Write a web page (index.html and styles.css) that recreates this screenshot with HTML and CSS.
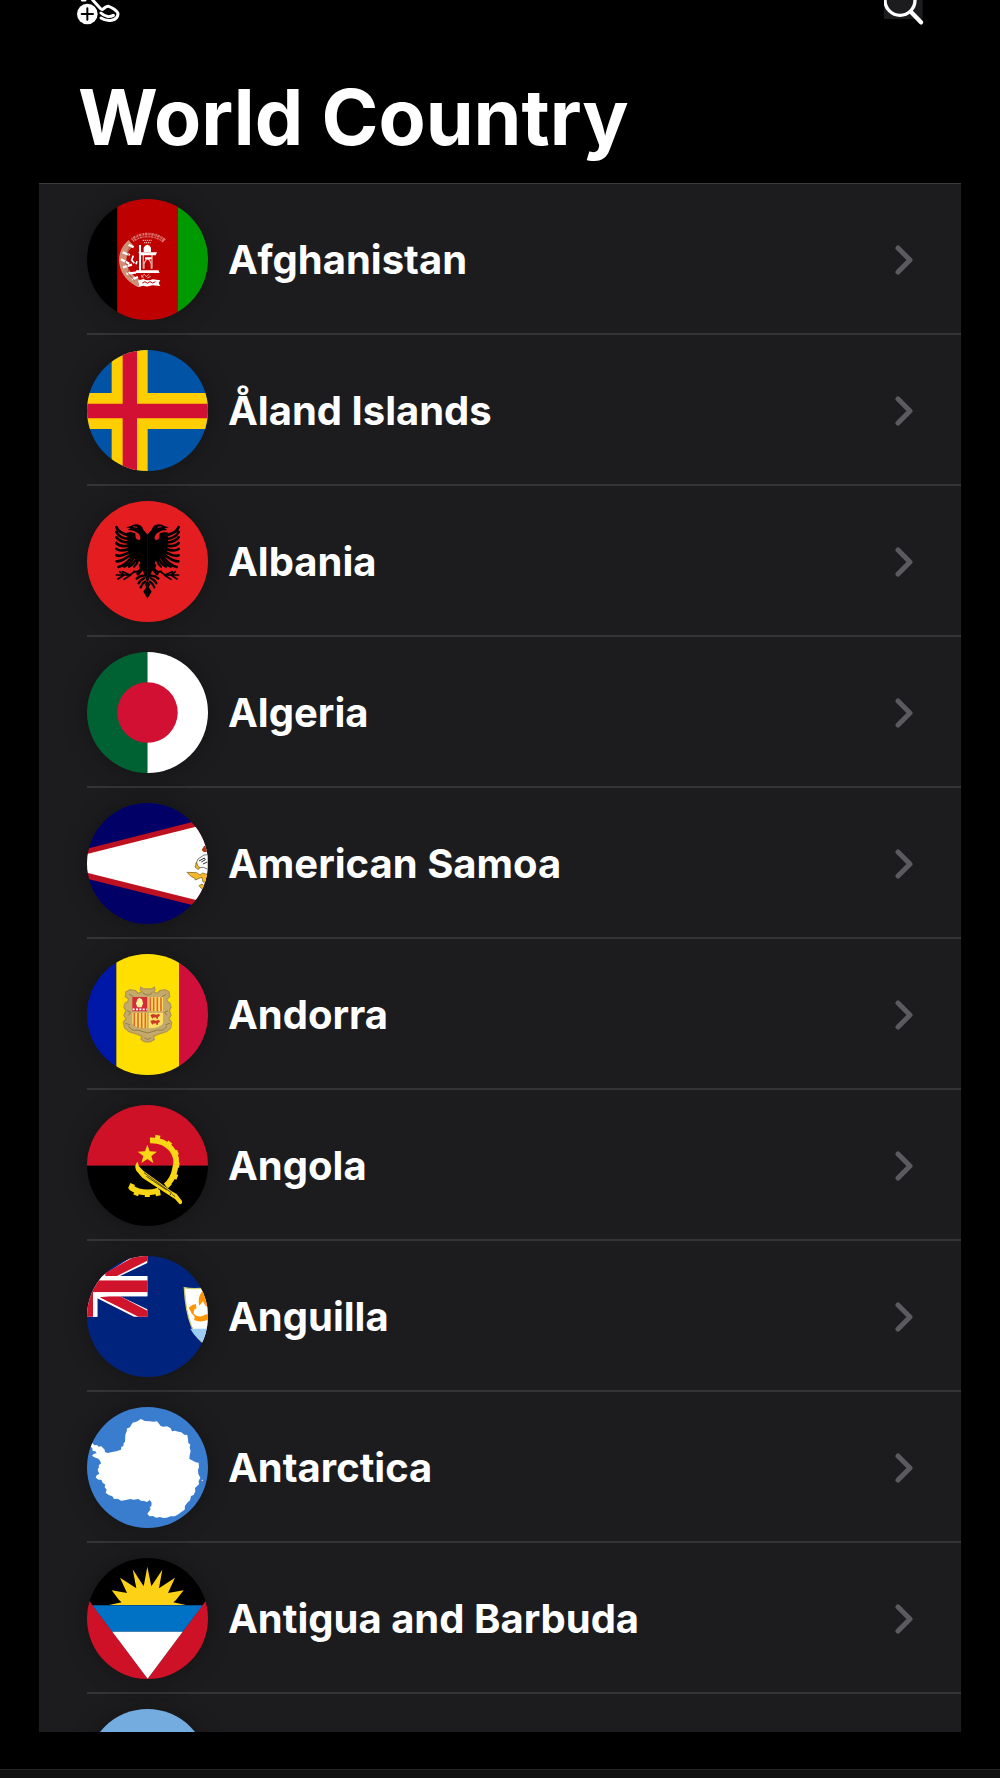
FILE: index.html
```
<!DOCTYPE html>
<html lang="en">
<head>
    <meta charset="UTF-8">
    <meta name="viewport" content="width=device-width, initial-scale=1">
    <title>World Country</title>
    <link rel="stylesheet" href="styles.css">
</head>
<body>
    <header class="header">
        <div class="toolbar">
            <button class="icon-button" aria-label="Add">
                <svg width="44" height="25" viewBox="0 0 132 75" fill="none" stroke="#fff" stroke-width="9" stroke-linecap="round" stroke-linejoin="round">
                    <path d="M19 0H27M50 0L74 26Q78 31 83 26Q91 18 98 19C106 21 125 33 126 42C124 64 94 66 75 54M75 39C86 50 101 52 112 46"/>
                    <circle cx="34" cy="42" r="31" fill="#fff" stroke="none"/>
                    <path d="M17 42H51M34 25V59" stroke="#000" stroke-width="6"/>
                </svg>
            </button>
            <button class="icon-button" aria-label="Search">
                <svg width="40" height="25" viewBox="0 0 120 75" fill="none" stroke="#fff">
                    <path d="M0 0H116V57H0Z" fill="#1c1c1e" stroke="none"/>
                    <circle cx="48" cy="1" r="45" stroke-width="10"/>
                    <path d="M82 37L111 67" stroke-width="13" stroke-linecap="round"/>
                </svg>
            </button>
        </div>
        <h1 class="title">World Country</h1>
    </header>

    <main class="list-wrapper">
        <ul class="country-list">
            <li><a class="country" href="#afghanistan">
                <svg class="flag" viewBox="51 27 363 363">
                    <path d="M51 27h91v363H51z"/>
                    <path fill="#bf0000" d="M142 27h182v363H142z"/>
                    <path fill="#090" d="M324 27h90v363h-90z"/>
                    <g fill="none">
                        <path d="M183 158C147 190 147 249 208 281" stroke="#cf8f75" stroke-width="22"/>
                        <path d="M158 187l22 8M153 208l25 13M159 232l27-8M169 251l29-3M186 268l18-7M176 164l15 8" stroke="#fff" stroke-width="7"/>
                        <path d="M180 170l-8 18 8 14-15 14 12 20-4 12 20 24" stroke="#a5331f" stroke-width="2"/>
                        <path d="M190 197l-5 13 8 10M201 214l-3 9" stroke="#fff" stroke-width="5"/>
                        <path d="M187 151C210 130 257 129 283 153" stroke="#d9716b" stroke-width="14" stroke-dasharray="4 2 7 2 2 1"/>
                        <path d="M194 147C216 133 250 133 276 149" stroke="#bf0000" stroke-width="2"/>
                        <path d="M218 151h27M222 158h20" stroke="#e7aca5" stroke-width="4" stroke-dasharray="4 2"/>
                        <path d="M210 165v77" stroke="#fff" stroke-width="6"/>
                        <path d="M220 195v41M246 195v41" stroke="#e7aca5" stroke-width="4"/>
                        <path d="M222 236v-14q11-30 22 0v14" stroke="#e7aca5" stroke-width="4"/>
                        <path d="M213 262l10-9 6 7 9-8M214 255l7 10M232 264l10-5" stroke="#e7aca5" stroke-width="3"/>
                    </g>
                    <path fill="#fff" d="M221 186V173Q224 166 232 164Q240 166 243 173V186ZM205 187H261L257 196H209ZM199 241H265L269 249H195ZM203 272L220 267Q233 274 248 268L271 271 266 279 271 288 247 286Q232 292 220 287L204 291 208 281Z"/>
                    <path fill="#fff" d="M225 202h20v6h-20z"/>
                    <path d="M217 279l8-4 7 5 8-5 8 4 8-4" fill="none" stroke="#bf0000" stroke-width="3"/>
                </svg>
                <span class="name">Afghanistan</span>
                <svg class="chevron" viewBox="0 0 18 30"><path d="M3 3L15 15L3 27"/></svg>
            </a></li>
            <li><a class="country" href="#aland">
                <svg class="flag" viewBox="51 29 363 363">
                    <path fill="#0053a5" d="M51 29h363v363H51z"/>
                    <path fill="#ffce00" d="M125 29h108v363H125zM51 158h363v108H51z"/>
                    <path fill="#d21034" d="M158 29h43v363h-43zM51 190h363v44H51z"/>
                </svg>
                <span class="name">Åland Islands</span>
                <svg class="chevron" viewBox="0 0 18 30"><path d="M3 3L15 15L3 27"/></svg>
            </a></li>
            <li><a class="country" href="#albania">
                <svg class="flag" viewBox="51 33 363 363">
                    <path fill="#e41e20" d="M51 33h363v363H51z"/>
                    <g id="eagle">
                        <path d="M233 134L220 119Q215 104 200 103Q188 103 181 109L168 112L181 115L173 120Q190 120 196 125Q213 131 211 148Q204 154 197 144L196 130L181 126L170 128L172 155L173 181L180 201L206 209L215 229L223 255L233 281Z"/>
                        <path d="M233 270L224 284L229 290L220 305L233 326Z"/>
                        <g fill="none" stroke="#000" stroke-width="8" stroke-linecap="round">
                            <path d="M139 111C143 122 158 132 177 136M139 126C145 138 158 146 177 147M139 142C147 153 160 158 177 157M139 159C147 168 161 170 177 167M139 177C149 184 163 182 178 176M139 196C150 201 165 194 181 185M140 214C154 215 170 204 185 192M145 231C159 228 176 214 188 198"/>
                            <path d="M163 230C176 224 186 213 192 202M177 230C187 224 196 214 200 204M192 230Q202 222 205 208M222 257Q209 257 200 266M222 265Q211 270 206 280M225 275Q215 281 212 292" stroke-width="7"/>
                            <path d="M212 235C207 244 201 249 191 244M195 244L180 255H139M182 255L162 268M180 255L158 245M161 255L149 245M162 255L144 267" stroke-width="5"/>
                            <path d="M211 226L216 237L204 251" stroke-width="10"/>
                        </g>
                        <path d="M190 110L202 112" stroke="#e41e20" stroke-width="3"/>
                    </g>
                    <use href="#eagle" transform="matrix(-1 0 0 1 465 0)"/>
                </svg>
                <span class="name">Albania</span>
                <svg class="chevron" viewBox="0 0 18 30"><path d="M3 3L15 15L3 27"/></svg>
            </a></li>
            <li><a class="country" href="#algeria">
                <svg class="flag" viewBox="0 0 120 120">
                    <path fill="#006233" d="M0 0h60v120H0z"/>
                    <path fill="#fff" d="M60 0h60v120H60z"/>
                    <circle cx="60" cy="60" r="30" fill="#d21034"/>
                </svg>
                <span class="name">Algeria</span>
                <svg class="chevron" viewBox="0 0 18 30"><path d="M3 3L15 15L3 27"/></svg>
            </a></li>
            <li><a class="country" href="#american-samoa">
                <svg class="flag" viewBox="51 39 363 363">
                    <path fill="#006" d="M51 39h363v363H51z"/>
                    <path fill="#bd1021" d="M51 176L370 95H414V346H370L51 266z"/>
                    <path fill="#fff" d="M51 192L375 111H414V329H375L51 248z"/>
                    <path fill="#a93a18" d="M395 180L402 168H414V186L401 186z"/>
                    <path fill="#fff" stroke="#333" stroke-width="2" d="M414 194L402 195 384 207 378 221 384 234 400 232 414 238z"/>
                    <path fill="none" stroke="#333" stroke-width="3" d="M387 213L403 204 406 209 394 216M399 222L412 216"/>
                    <path fill="#f5b82b" stroke="#6e5515" stroke-width="2" d="M380 217L375 231 385 239 389 232 383 227zM351 247L380 248 390 255 398 249 414 254V278L399 276 396 262 385 266 376 270 374 264 364 260zM387 287L396 282 403 288 414 284V292L396 297z"/>
                </svg>
                <span class="name">American Samoa</span>
                <svg class="chevron" viewBox="0 0 18 30"><path d="M3 3L15 15L3 27"/></svg>
            </a></li>
            <li><a class="country" href="#andorra">
                <svg class="flag" viewBox="51 42 363 363">
                    <path fill="#0018a8" d="M51 42h88v363H51z"/>
                    <path fill="#fedf00" d="M139 42h188v363H139z"/>
                    <path fill="#d0103a" d="M327 42h87v363h-87z"/>
                    <path fill="#c4aa6a" stroke="#b39653" stroke-width="4" d="M233 147L222 147 212 142 211 151 217 156 204 160 196 152 180 149 168 156 166 170 176 177 174 184 165 190 162 202 168 211 162 226 168 236 160 247 164 264 177 275 203 283 216 289 213 298 222 304 233 306 243 304 253 298 250 289 263 283 289 275 302 264 305 248 297 236 303 226 298 211 303 202 300 190 292 184 290 177 299 170 297 156 285 149 270 152 262 160 249 156 255 151 253 142 244 147Z"/>
                    <path fill="none" stroke="#907a49" stroke-width="3" d="M177 163l13 7M289 163l-13 7M219 159q14 12 27 0M172 212l10 5-7 9M294 212l-10 5 7 9M175 257Q183 275 203 270L233 279 263 270Q283 275 291 257M223 293l10 6 10-6M166 250l14 4M300 250l-14 4"/>
                    <path fill="#d52b36" d="M187 171h44v43h-44z"/>
                    <path fill="#fedf61" d="M236 171h43v43h-43zM187 218H231V265Q192 265 187 250zM236 218H279V250Q272 265 236 265z"/>
                    <path fill="#fff2a0" d="M202 178l6-5 8 5 3 12-4 12H202l-4-11z"/>
                    <path stroke="#fff" stroke-width="5" stroke-dasharray="6 4" d="M188 208h42"/>
                    <path stroke="#e0662d" stroke-width="5" d="M241 172v42M251 172v42M262 172v42M273 172v42M193 218v40M204 218v45M215 218v47M226 218v47"/>
                    <path id="cow" fill="#c93c28" d="M241 225L249 222 259 224 267 221 270 227 264 231V236H259L258 232 249 233 247 237 244 231z"/>
                    <use href="#cow" transform="translate(0 18)"/>
                </svg>
                <span class="name">Andorra</span>
                <svg class="chevron" viewBox="0 0 18 30"><path d="M3 3L15 15L3 27"/></svg>
            </a></li>
            <li><a class="country" href="#angola">
                <svg class="flag" viewBox="51 30 363 363">
                    <path fill="#ce1126" d="M51 30h363v182H51z"/>
                    <path d="M51 212h363v181H51z"/>
                    <path fill="none" stroke="#f9d616" stroke-width="17" d="M240 136C294 134 330 176 315 222C311 245 302 260 287 272M182 277Q218 302 267 286"/>
                    <path fill="none" stroke="#f9d616" stroke-width="15" d="M264 121l-3 16M301 141l-10 13M324 171l-15 6M328 211l-16-2M322 247l-15-6M300 274l-10-10M188 267l-7 16M202 288l-5 13M232 290v16M262 286l3 16"/>
                    <path fill="#f9d616" d="M232 149L239 169 261 170 244 183 250 204 232 192 214 204 220 183 203 170 225 169z"/>
                    <path fill="#f9d616" d="M203 200L207 214 220 227 305 289 320 297 336 318Q338 328 329 328L315 312 304 305 217 248 199 227Q191 211 203 200z"/>
                    <path fill="none" stroke="#000" stroke-width="2" d="M222 233L304 293 300 301M229 244L290 285M307 298L315 305"/>
                </svg>
                <span class="name">Angola</span>
                <svg class="chevron" viewBox="0 0 18 30"><path d="M3 3L15 15L3 27"/></svg>
            </a></li>
            <li><a class="country" href="#anguilla">
                <svg class="flag" viewBox="51 33 363 363">
                    <path fill="#00247d" d="M51 33h363v363H51z"/>
                    <path fill="#fff" d="M51 93H232V154H82V215H51zM95 93L190 33H232V54L150 93zM82 154H150L232 193V215H192L82 160z"/>
                    <path fill="#cf142b" d="M51 106H232V142H69V215H51zM106 84L196 33H232V47L141 93H106zM117 154H150L232 197V215H205L89 157z"/>
                    <path fill="#fff" d="M51 93H232V106H51zM69 142H232V154H82V215H69z"/>
                    <path fill="#fff" stroke="#c8cf73" stroke-width="4" d="M343 128Q370 134 414 128V304Q350 270 343 128z"/>
                    <path fill="#9dcdf3" d="M361 251H414V301Q378 284 361 251z"/>
                    <path fill="#ff9500" d="M388 182Q381 159 397 139L414 134V188Q402 180 399 169zM356 188L367 180 378 177 379 190 372 195 371 206Q387 221 405 209L414 207V224Q391 234 372 225 378 213 366 207z"/>
                </svg>
                <span class="name">Anguilla</span>
                <svg class="chevron" viewBox="0 0 18 30"><path d="M3 3L15 15L3 27"/></svg>
            </a></li>
            <li><a class="country" href="#antarctica">
                <svg class="flag" viewBox="51 36 363 363">
                    <path fill="#3a7dce" d="M51 36h363v363H51z"/>
                    <path fill="#fff" d="M67 144L73 151 81 150 86 155 94 154 104 164 105 171 113 174 127 171 139 169 153 164 154 155 160 154 161 145 165 140 166 119 171 106 170 101 180 97 183 91 188 83 199 80 207 76 215 73 224 78 240 79 250 80 261 79 266 85 272 93 280 95 291 94 302 100 306 109 315 107 325 110 334 112 343 119 352 120 354 133 355 144 361 149 359 158 362 169 359 181 358 192 366 196 377 202 386 203 387 217 384 225 385 237 391 248 386 258 387 268 379 275 375 279 376 289 371 300 363 303 360 316 352 323 345 332 344 344 337 349 325 358 314 364 302 364 290 368 280 369 270 366 259 368 248 363 238 364 232 356 238 348 242 343 239 337 244 333 245 323 239 315 231 321 222 318 212 317 206 312 191 314 181 312 164 316 153 317 143 311 132 312 127 304 116 300 107 293 110 284 104 277 106 269 98 263 94 254 86 254 77 248 80 241 88 236 85 230 83 223 87 217 86 210 93 206 91 199 85 191 73 187 66 182 72 176 80 175 76 169 68 168 67 159 61 155z"/>
                    <path stroke="#fff" stroke-width="3" d="M395 256h4M211 72v4"/>
                </svg>
                <span class="name">Antarctica</span>
                <svg class="chevron" viewBox="0 0 18 30"><path d="M3 3L15 15L3 27"/></svg>
            </a></li>
            <li><a class="country" href="#antigua">
                <svg class="flag" viewBox="51 39 363 363">
                    <path d="M51 39H414V190H51z"/>
                    <path fill="#ce1126" d="M51 158L233 402H51zM414 158L233 402H414z"/>
                    <path fill="#fcd116" d="M117 180L155 172 147 165 125 136 171 144 150 98 199 130 188 73 221 124 232 65 244 124 277 74 267 130 315 98 294 144 341 136 318 165 310 172 347 180z"/>
                    <path fill="#0072c6" d="M67 181H398L338 260H127z"/>
                    <path fill="#fff" d="M127 260h211L233 401z"/>
                </svg>
                <span class="name">Antigua and Barbuda</span>
                <svg class="chevron" viewBox="0 0 18 30"><path d="M3 3L15 15L3 27"/></svg>
            </a></li>
            <li><a class="country" href="#argentina" aria-label="Argentina">
                <svg class="flag" viewBox="0 0 120 120">
                    <path fill="#74acdf" d="M0 0h120v120H0z"/>
                    <path fill="#fff" d="M0 40h120v40H0z"/>
                </svg>
            </a></li>
        </ul>
    </main>

    <footer class="tab-bar"></footer>
</body>
</html>
```

FILE: styles.css
```
:root {
    --background: #000;
    --list-bg: #1c1c1e;
    --separator: #343437;
    --text: #fff;
    --chevron: #5b5b5f;
}

* {
    box-sizing: border-box;
}

body {
    display: flex;
    flex-direction: column;
    height: 100vh;
    margin: 0;
    overflow: hidden;
    background: var(--background);
    color: var(--text);
    font-family: Inter, "Liberation Sans", sans-serif;
}

/* header */
.header {
    padding: 0 76px;
}

.toolbar {
    display: flex;
    justify-content: space-between;
}

.icon-button {
    display: flex;
    padding: 0;
    border: none;
    background: none;
    cursor: pointer;
}

.title {
    margin: 44px 0 18px;
    padding-left: 2px;
    font-size: 77px;
    line-height: 96px;
    font-weight: 700;
    white-space: nowrap;
}

/* country list */
.list-wrapper {
    flex: 1;
    min-height: 0;
    margin: 0 39px;
    overflow: hidden;
    background: var(--list-bg);
    border-top: 1px solid #3a3a3c;
}

.country-list {
    margin: 0;
    padding: 0 0 0 48px;
    list-style: none;
}

.country {
    display: flex;
    align-items: center;
    padding: 15px 48px 13px 0;
    border-bottom: 2px solid var(--separator);
    color: inherit;
    text-decoration: none;
}

.flag {
    flex: none;
    width: 121px;
    height: 121px;
    border-radius: 50%;
    overflow: hidden;
    box-shadow: 0 0 24px rgba(0, 0, 0, 0.3);
}

.name {
    flex: 1;
    padding-left: 20px;
    font-size: 40px;
    line-height: 48px;
    font-weight: 700;
}

.chevron {
    flex: none;
    width: 18px;
    height: 30px;
    fill: none;
    stroke: var(--chevron);
    stroke-width: 5;
    stroke-linecap: round;
    stroke-linejoin: round;
}

/* bottom bar */
.tab-bar {
    height: 9px;
    margin-top: 37px;
    background: #111;
    border-top: 1px solid #262628;
}
```
